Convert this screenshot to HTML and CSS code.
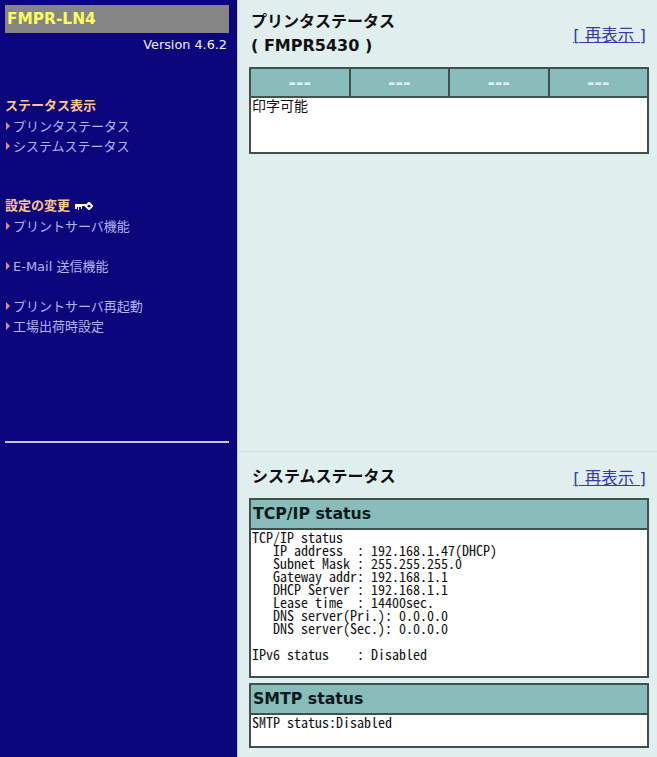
FILE: index.html
```html
<!DOCTYPE html>
<html lang="ja">
<head>
<meta charset="utf-8">
<title>FMPR-LN4</title>
<link rel="stylesheet" href="styles.css">
</head>
<body>
<nav class="side">
  <div class="brand">FMPR-LN4</div>
  <div class="version">Version 4.6.2</div>
  <div class="group first">
    <div class="group-title">ステータス表示</div>
    <a class="item" href="#">プリンタステータス</a>
    <a class="item" href="#">システムステータス</a>
  </div>
  <div class="group">
    <div class="group-title">設定の変更
      <svg class="key" width="18" height="8" viewBox="0 0 18 8"><path d="M0 2h11v2H7v3H6V5H4v3H3V5H2v2H0z" fill="#fff"/><path d="M14 .8 17.200 4 14 7.200 10.800 4z" fill="none" stroke="#fff" stroke-width="2"/></svg>
    </div>
    <a class="item" href="#">プリントサーバ機能</a>
    <a class="item gap" href="#">E-Mail 送信機能</a>
    <a class="item gap" href="#">プリントサーバ再起動</a>
    <a class="item" href="#">工場出荷時設定</a>
  </div>
  <hr class="rule">
</nav>
<main class="main">
  <section class="frame top">
    <header class="head">
      <h1 class="title">プリンタステータス<br>( FMPR5430 )</h1>
      <a class="reload" href="#">[ 再表示 ]</a>
    </header>
    <div class="panel">
      <div class="lamps">
        <div class="lamp">---</div>
        <div class="lamp">---</div>
        <div class="lamp">---</div>
        <div class="lamp">---</div>
      </div>
      <div class="msg">印字可能</div>
    </div>
  </section>
  <section class="frame bottom">
    <header class="head short">
      <h1 class="title">システムステータス</h1>
      <a class="reload" href="#">[ 再表示 ]</a>
    </header>
    <div class="panel">
      <h2 class="bar">TCP/IP status</h2>
      <pre class="log tall">TCP/IP status
   IP address  : 192.168.1.47(DHCP)
   Subnet Mask : 255.255.255.0
   Gateway addr: 192.168.1.1
   DHCP Server : 192.168.1.1
   Lease time  : 14400sec.
   DNS server(Pri.): 0.0.0.0
   DNS server(Sec.): 0.0.0.0

IPv6 status    : Disabled</pre>
    </div>
    <div class="panel next">
      <h2 class="bar">SMTP status</h2>
      <pre class="log">SMTP status:Disabled</pre>
    </div>
  </section>
</main>
</body>
</html>
```
FILE: styles.css
```css
html, body { margin: 0; padding: 0; height: 100%; overflow: hidden; }
body {
  display: flex;
  width: 657px;
  height: 757px;
  font-family: "DejaVu Sans", "Noto Sans CJK JP", sans-serif;
  background: #e0efee;
}
.side {
  width: 224px;
  padding: 5px 8px 0 5px;
  flex: none;
  background: #0c067c;
  color: #fff;
}
.brand {
  height: 28px;
  line-height: 28px;
  padding-left: 2px;
  background: #858585;
  color: #fbfb5c;
  font-size: 15.400px;
  font-weight: bold;
}
.version {
  margin-top: 3px;
  padding-right: 2px;
  line-height: 18px;
  font-size: 12.800px;
  text-align: right;
  color: #f0f0ff;
}
.group { margin-top: 40px; }
.group.first { margin-top: 42px; }
.group-title {
  display: flex;
  align-items: center;
  gap: 5px;
  height: 20px;
  line-height: 20px;
  font-size: 13px;
  font-weight: bold;
  color: #fcc48c;
}
.item {
  display: block;
  position: relative;
  padding-left: 8px;
  height: 20px;
  line-height: 21px;
  font-size: 13px;
  color: #b4b4ee;
  text-decoration: none;
}
.item::before {
  content: "";
  position: absolute;
  left: 1px;
  top: 6px;
  border-left: 4px solid #d88e90;
  border-top: 4px solid transparent;
  border-bottom: 4px solid transparent;
}
.item.gap { margin-top: 20px; }
.rule {
  margin: 105px 0 0;
  border: 0;
  height: 2px;
  background: #c4c4f0;
}
.main {
  flex: 1;
  display: flex;
  flex-direction: column;
  border-left: 1px solid #c8c8f4;
}
.frame { padding: 0 8px 0 11px; }
.top { height: 452px; border-bottom: 1px solid #d3dedd; box-sizing: border-box; }
.bottom { flex: 1; }
.head {
  display: flex;
  justify-content: space-between;
  align-items: center;
  box-sizing: border-box;
  height: 67px;
  padding: 1px 3px 0 2px;
}
.head.short { height: 46px; padding: 4px 3px 0; }
.title {
  margin: 0;
  font-size: 16px;
  font-weight: bold;
  line-height: 24px;
  color: #111;
}
.reload {
  font-size: 16.500px;
  color: #3a3aa8;
  text-decoration: underline;
  text-decoration-thickness: 1px;
}
.panel { border: 2px solid #3f504e; background: #fff; }
.panel.next { margin-top: 5px; }
.lamps { display: flex; background: #88bdbb; border-bottom: 2px solid #3f504e; }
.lamp {
  flex: 1;
  height: 27px;
  line-height: 27px;
  text-align: center;
  font-size: 18px;
  font-weight: bold;
  color: #e4f0f0;
  border-left: 2px solid #3f504e;
}
.lamp:first-child { border-left: 0; }
.msg {
  height: 54px;
  padding-left: 1px;
  font-family: "Noto Sans CJK JP", sans-serif;
  font-size: 14px;
  line-height: 15px;
  color: #111;
}
.bar {
  margin: 0;
  height: 28px;
  line-height: 27px;
  padding-left: 2px;
  background: #88bdbb;
  border-bottom: 2px solid #3f504e;
  font-size: 15.750px;
  color: #0b1a1a;
}
.log {
  margin: 0;
  padding: 1px 1px 0;
  height: 30px;
  font-family: "Noto Sans Mono CJK JP", "Liberation Mono", monospace;
  font-size: 14px;
  line-height: 13px;
  color: #111;
}
.log.tall { height: 145px; }
```
